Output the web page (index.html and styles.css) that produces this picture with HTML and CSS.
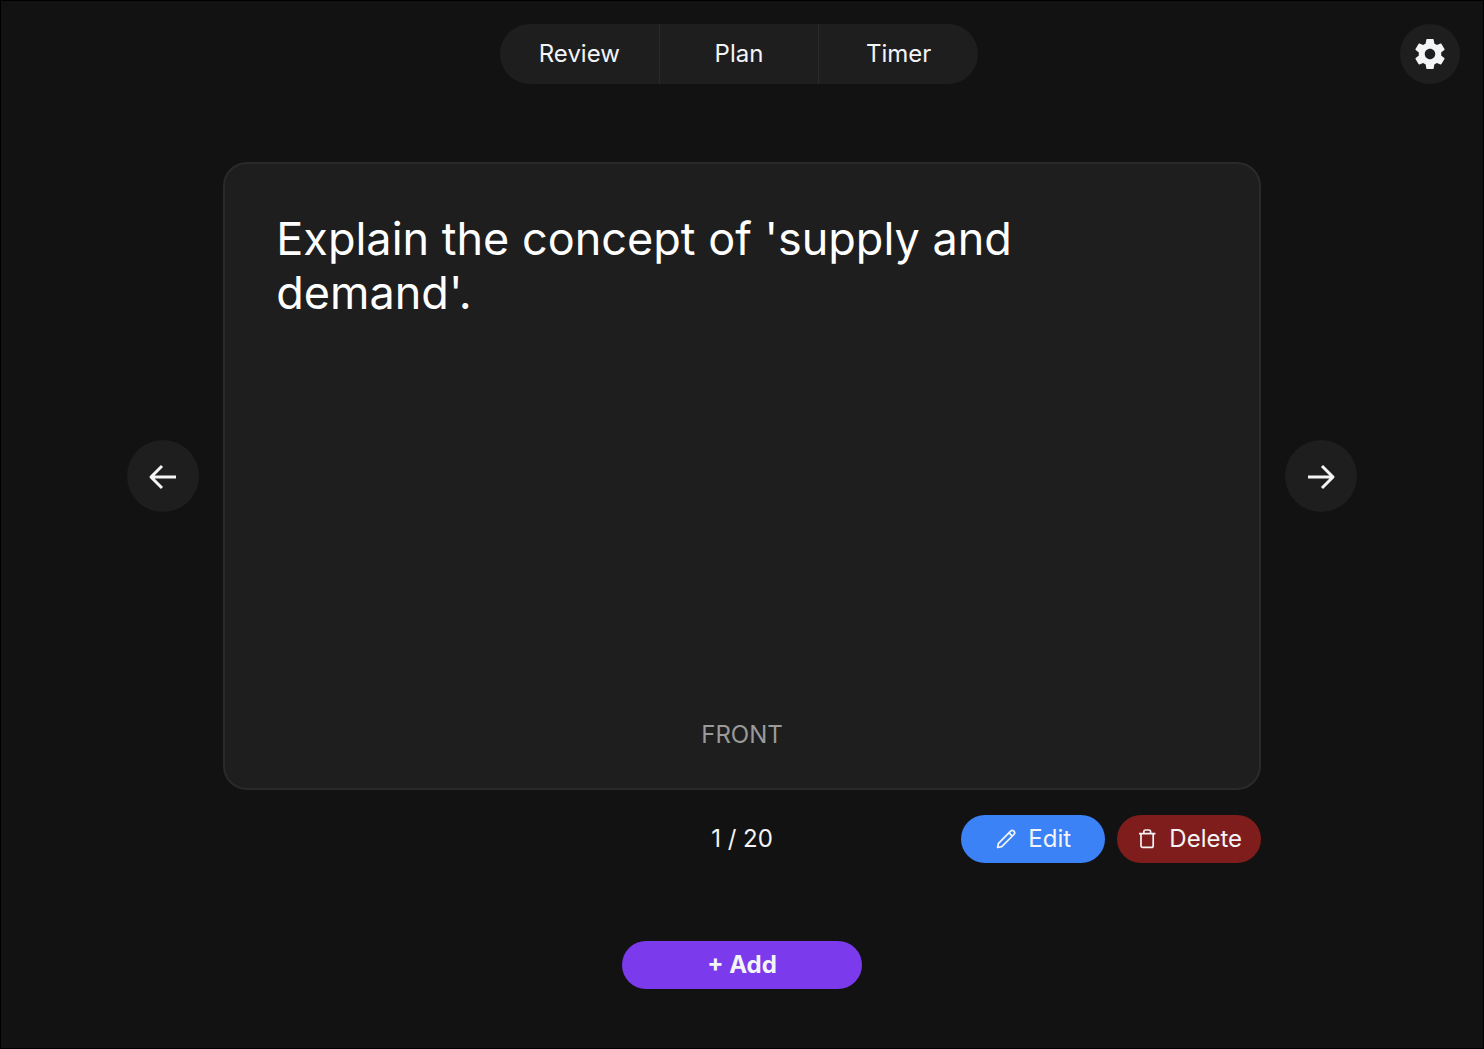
FILE: index.html
```html
<!DOCTYPE html>
<html lang="en">
<head>
<meta charset="utf-8">
<meta name="viewport" content="width=device-width, initial-scale=1">
<title>Flashcards</title>
<link rel="stylesheet" href="styles.css">
</head>
<body>
<div class="app">
  <header class="topbar">
    <nav class="tabs">
      <button class="tab" type="button">Review</button>
      <button class="tab" type="button">Plan</button>
      <button class="tab" type="button">Timer</button>
    </nav>
    <button class="round settings" type="button" aria-label="Settings">
      <svg width="36" height="36" viewBox="0 0 24 24" fill="currentColor" aria-hidden="true"><path d="M19.43 12.98c.04-.32.07-.64.07-.98s-.03-.66-.07-.98l2.11-1.65c.19-.15.24-.42.12-.64l-2-3.46c-.12-.22-.39-.3-.61-.22l-2.49 1c-.52-.4-1.08-.73-1.69-.98l-.38-2.65C14.46 2.18 14.25 2 14 2h-4c-.25 0-.46.18-.49.42l-.38 2.65c-.61.25-1.17.59-1.69.98l-2.49-1c-.23-.09-.49 0-.61.22l-2 3.46c-.13.22-.07.49.12.64l2.11 1.65c-.04.32-.07.65-.07.98s.03.66.07.98l-2.11 1.65c-.19.15-.24.42-.12.64l2 3.46c.12.22.39.3.61.22l2.49-1c.52.4 1.08.73 1.69.98l.38 2.65c.03.24.24.42.49.42h4c.25 0 .46-.18.49-.42l.38-2.65c.61-.25 1.17-.59 1.69-.98l2.49 1c.23.09.49 0 .61-.22l2-3.46c.12-.22.07-.49-.12-.64l-2.11-1.65zM12 15.5c-1.93 0-3.5-1.57-3.5-3.5s1.57-3.5 3.5-3.5 3.5 1.57 3.5 3.5-1.57 3.5-3.5 3.5z"/></svg>
    </button>
  </header>

  <main class="deck">
    <div class="stage">
      <button class="round step" type="button" aria-label="Previous card">
        <svg width="32" height="32" viewBox="0 0 32 32" fill="none" stroke="currentColor" stroke-width="3" stroke-linejoin="round" aria-hidden="true"><path d="M29 17H4M15 6l-11 11 11 11"/></svg>
      </button>
      <article class="card">
        <p class="question">Explain the concept of 'supply and demand'.</p>
        <p class="side">FRONT</p>
      </article>
      <button class="round step" type="button" aria-label="Next card">
        <svg width="32" height="32" viewBox="0 0 32 32" fill="none" stroke="currentColor" stroke-width="3" stroke-linejoin="round" aria-hidden="true"><path d="M3 17h25M17 6l11 11-11 11"/></svg>
      </button>
    </div>
    <div class="controls">
      <span class="count">1 / 20</span>
      <div class="actions">
        <button class="pill edit" type="button">
          <svg width="24" height="24" viewBox="0 0 24 24" fill="none" stroke="currentColor" stroke-width="1.7" stroke-linejoin="round" aria-hidden="true"><path d="M3.6 20.5l.9-4.2L16.6 4.2a2.3 2.3 0 0 1 3.3 3.3L7.8 19.6zM15 5.8l3.3 3.3"/></svg>
          Edit
        </button>
        <button class="pill delete" type="button">
          <svg width="24" height="24" viewBox="0 0 24 24" fill="none" stroke="currentColor" stroke-width="1.7" stroke-linejoin="round" aria-hidden="true"><path d="M4 6.7h16.4M8.8 6.7V4.8a1.8 1.8 0 0 1 1.8-1.8h3.2a1.8 1.8 0 0 1 1.8 1.8v1.9M6 6.7v12a1.7 1.7 0 0 0 1.7 1.7h8.8a1.7 1.7 0 0 0 1.7-1.7V6.7"/></svg>
          Delete
        </button>
      </div>
    </div>
  </main>

  <footer class="bottom">
    <button class="pill add" type="button">+ Add</button>
  </footer>
</div>
</body>
</html>
```
FILE: styles.css
```css
* { box-sizing: border-box; }

body {
  margin: 0;
  background: #121212;
  color: #f3f4f6;
  font: 24px/36px Inter, "Liberation Sans", sans-serif;
}

button {
  border: 0;
  padding: 0;
  color: inherit;
  font: inherit;
  cursor: pointer;
}

svg { display: block; flex: none; }

.app {
  display: flex;
  flex-direction: column;
  min-height: 100vh;
  border: 1px solid #000;
}

.topbar {
  display: grid;
  grid-template-columns: 54px 1fr 60px;
  padding: 23px;
}

.tabs {
  display: flex;
  grid-column: 2;
  justify-self: center;
  width: 478px;
  border-radius: 30px;
  overflow: hidden;
  background: #1e1e1e;
}

.tab {
  flex: 1;
  height: 60px;
  background: none;
}

.tab:not(:last-child) {
  border-right: 1px solid #2a2a2a;
}

.round {
  display: flex;
  flex: none;
  align-items: center;
  justify-content: center;
  border-radius: 50%;
  background: #1e1e1e;
}

.settings { width: 60px; height: 60px; }
.step { width: 72px; height: 72px; }

.deck {
  display: flex;
  flex-direction: column;
  gap: 25px;
  padding-top: 55px;
}

.stage {
  display: flex;
  align-items: center;
  justify-content: center;
  gap: 24px;
}

.card {
  display: flex;
  flex-direction: column;
  justify-content: space-between;
  width: 70%;
  min-height: calc(60vh - 1px);
  padding: 48px 51px 35px;
  border: 2px solid #2a2a2a;
  border-radius: 24px;
  background: #1e1e1e;
}

.question {
  margin: 0;
  color: #fff;
  font-size: 45px;
  line-height: 54px;
}

.side {
  margin: 0;
  color: #9a9a9a;
  text-align: center;
}

.controls {
  display: grid;
  grid-template-columns: 1fr auto 1fr;
  align-items: center;
  align-self: center;
  width: 70%;
}

.count { grid-column: 2; }

.actions {
  display: flex;
  justify-content: flex-end;
  gap: 12px;
}

.pill {
  display: flex;
  align-items: center;
  justify-content: center;
  gap: 10px;
  width: 144px;
  height: 48px;
  border-radius: 24px;
}

.edit { background: #3b82f6; }
.delete { background: #7f1d1d; }

.bottom {
  display: flex;
  justify-content: center;
  padding: 78px 24px 24px;
}

.add {
  width: 240px;
  background: #7c3aed;
  font-weight: 700;
}
```
